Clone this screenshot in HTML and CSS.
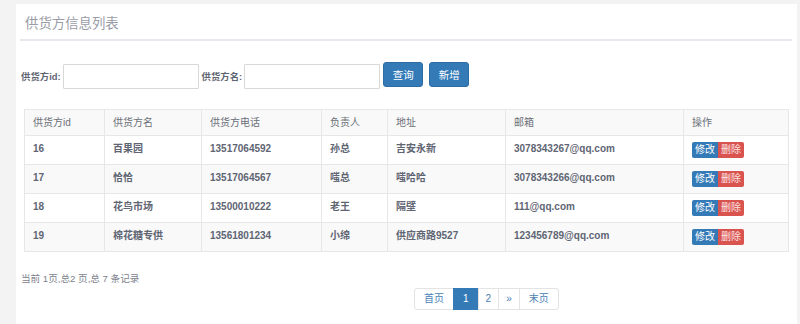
FILE: index.html
```html
<!DOCTYPE html>
<html>
<head>
    <meta charset="UTF-8">
    <title>供货方信息列表</title>
    <link rel="stylesheet" href="styles.css">
</head>
<body>
    <div class="ibox">
        <div class="ibox-title">供货方信息列表</div>
        <div class="ibox-content">
            <form class="search-form">
                <label class="form-label">供货方id:</label>
                <input type="text" class="form-input">
                <label class="form-label">供货方名:</label>
                <input type="text" class="form-input">
                <button type="button" class="btn btn-primary">查询</button>
                <button type="button" class="btn btn-primary btn-add">新增</button>
            </form>

            <table class="data-table">
                <colgroup>
                    <col style="width:80px">
                    <col style="width:97px">
                    <col style="width:120px">
                    <col style="width:66px">
                    <col style="width:118px">
                    <col style="width:178px">
                    <col style="width:105px">
                </colgroup>
                <thead>
                    <tr>
                        <th>供货方id</th>
                        <th>供货方名</th>
                        <th>供货方电话</th>
                        <th>负责人</th>
                        <th>地址</th>
                        <th>邮箱</th>
                        <th>操作</th>
                    </tr>
                </thead>
                <tbody>
                    <tr>
                        <td>16</td>
                        <td>百果园</td>
                        <td>13517064592</td>
                        <td>孙总</td>
                        <td>吉安永新</td>
                        <td>3078343267@qq.com</td>
                        <td><span class="btn-group"><a class="btn-xs btn-edit">修改</a><a class="btn-xs btn-del">删除</a></span></td>
                    </tr>
                    <tr>
                        <td>17</td>
                        <td>恰恰</td>
                        <td>13517064567</td>
                        <td>嗤总</td>
                        <td>嗤哈哈</td>
                        <td>3078343266@qq.com</td>
                        <td><span class="btn-group"><a class="btn-xs btn-edit">修改</a><a class="btn-xs btn-del">删除</a></span></td>
                    </tr>
                    <tr>
                        <td>18</td>
                        <td>花鸟市场</td>
                        <td>13500010222</td>
                        <td>老王</td>
                        <td>隔壁</td>
                        <td>111@qq.com</td>
                        <td><span class="btn-group"><a class="btn-xs btn-edit">修改</a><a class="btn-xs btn-del">删除</a></span></td>
                    </tr>
                    <tr>
                        <td>19</td>
                        <td>棉花糖专供</td>
                        <td>13561801234</td>
                        <td>小绵</td>
                        <td>供应商路9527</td>
                        <td>123456789@qq.com</td>
                        <td><span class="btn-group"><a class="btn-xs btn-edit">修改</a><a class="btn-xs btn-del">删除</a></span></td>
                    </tr>
                </tbody>
            </table>

            <div class="table-footer">
                <div class="page-info">当前 1页,总2 页,总 7 条记录</div>
                <div class="page-nav">
                    <ul class="pagination">
                        <li><a>首页</a></li>
                        <li class="active"><a>1</a></li>
                        <li><a>2</a></li>
                        <li><a>&raquo;</a></li>
                        <li><a>末页</a></li>
                    </ul>
                </div>
            </div>
        </div>
    </div>
</body>
</html>
```

FILE: styles.css
```css
html, body {
    margin: 0;
    height: 100%;
    overflow: hidden;
}

body {
    font-family: "Liberation Sans", "Noto Sans CJK SC", sans-serif;
    font-size: 10px;
    color: #5f6573;
    background-color: #f3f3f4;
    padding: 4px 3px 0 16px;
    box-sizing: border-box;
}

.ibox {
    background-color: #fff;
    min-height: 320px;
    padding: 0 5px 0 4px;
}

.ibox-title {
    padding: 4px 0 0 5px;
    line-height: 31px;
    font-size: 13.4px;
    color: #999ca6;
    border-bottom: 2px solid #e8e8ef;
}

.search-form {
    display: flex;
    align-items: flex-start;
    margin: 21px 0 0 1px;
    height: 27px;
}

.form-label {
    font-weight: bold;
    font-size: 9.4px;
    line-height: 27px;
    padding-top: 1px;
    margin-right: 2px;
}

.form-input {
    width: 136px;
    height: 25px;
    box-sizing: border-box;
    margin: 2px 3px 0 0;
    border: 1px solid #d8d8d8;
    border-radius: 1px;
    padding: 0 6px;
    font-size: 10px;
}

.btn {
    width: 40px;
    height: 25px;
    box-sizing: border-box;
    border: 1px solid #2e6da4;
    border-radius: 3px;
    font-family: inherit;
    font-size: 10.5px;
    color: #fff;
    padding: 0;
}

.btn-primary {
    background-color: #337ab7;
}

.btn-add {
    margin-left: 6px;
}

.data-table {
    table-layout: fixed;
    width: 764px;
    margin: 20px 0 0 4px;
    border-collapse: collapse;
    border: 1px solid #e7e7e7;
}

.data-table th,
.data-table td {
    border: 1px solid #e7e7e7;
    text-align: left;
    padding: 5px 8px;
    line-height: 18px;
    white-space: nowrap;
}

.data-table th {
    font-weight: normal;
    color: #6b6f78;
    padding: 4px 8px;
    line-height: 17px;
    background-color: #f9f9f9;
}

.data-table td {
    height: 18px;
    font-weight: bold;
    vertical-align: top;
    padding-top: 4px;
    padding-bottom: 6px;
}

.data-table tbody tr:nth-child(even) {
    background-color: #f9f9f9;
}

.btn-group {
    display: inline-flex;
    vertical-align: top;
    margin-top: 2px;
}

.btn-xs {
    display: block;
    width: 26px;
    height: 16px;
    line-height: 16px;
    text-align: center;
    font-weight: normal;
    font-size: 10px;
    color: #fff;
}

.btn-edit {
    background-color: #337ab7;
    border-radius: 2px 0 0 2px;
}

.btn-del {
    background-color: #d9534f;
    color: #fbe3e3;
    border-radius: 0 2px 2px 0;
}

.table-footer {
    display: flex;
    margin-top: 20px;
}

.page-info {
    width: 393px;
    line-height: 14px;
    padding-left: 1px;
    color: #7d828c;
    font-size: 9.6px;
}

.page-nav {
    padding-top: 16px;
}

.pagination {
    display: flex;
    list-style: none;
    margin: 0;
    padding: 0;
}

.pagination li a {
    display: block;
    height: 22px;
    line-height: 20px;
    box-sizing: border-box;
    border: 1px solid #e3e3e3;
    margin-left: -1px;
    padding: 0 7px;
    color: #4a7fb5;
    font-size: 10px;
}

.pagination li:first-child a {
    margin-left: 0;
    padding: 0 9px;
    border-radius: 3px 0 0 3px;
}

.pagination li:last-child a {
    padding: 0 9px;
    border-radius: 0 3px 3px 0;
}

.pagination li.active a {
    background-color: #337ab7;
    border-color: #337ab7;
    color: #fff;
    padding: 0 9px;
}
```
